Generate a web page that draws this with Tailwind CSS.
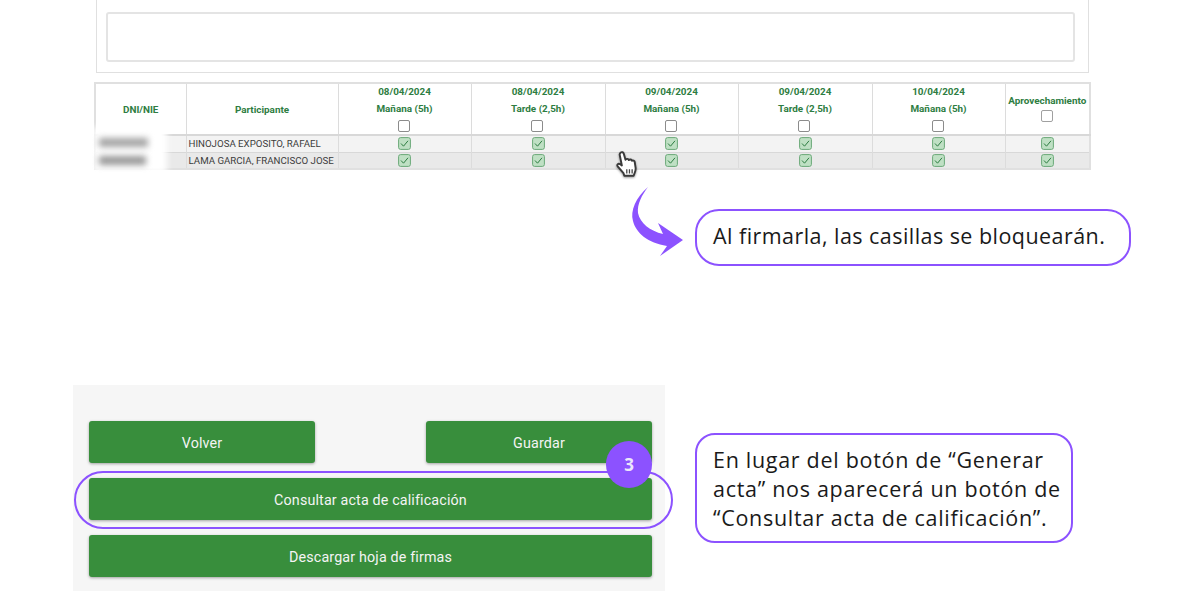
<!DOCTYPE html>
<html lang="es">
<head>
    <meta charset="UTF-8">
    <title>Acta de calificación</title>
    <script src="https://cdn.jsdelivr.net/npm/@tailwindcss/browser@4"></script>
</head>
<body class="bg-white">
<main class="relative w-[1200px] h-[612px] overflow-hidden bg-white font-['Roboto',sans-serif]">

    <!-- caja de observaciones -->
    <div class="ml-[96px] w-[993px] h-[73px] border-[1.5px] border-[#e0e0e0] border-t-0 pl-[9px] pr-[13px] pt-[12px]">
        <div class="h-[50px] border-2 border-[#e4e4e4] rounded-[3px]"></div>
    </div>

    <!-- tabla de asistencia -->
    <table class="mt-[9px] ml-[94px] w-[995px] table-fixed border-collapse border-2 border-[#e0e0e0] text-[9.900px] leading-[17px]">
        <colgroup>
            <col class="w-[91px]"><col class="w-[152px]"><col class="w-[133px]"><col class="w-[134px]"><col class="w-[133px]"><col class="w-[134px]"><col class="w-[133px]"><col class="w-[85px]">
        </colgroup>
        <thead class="text-[#2e7d42] font-bold text-center">
            <tr class="h-[52px] border-b-2 border-[#d8d8d8]">
                <th class="border-r-[1.5px] border-[#dcdcdc]">DNI/NIE</th>
                <th class="border-r-[1.5px] border-[#dcdcdc]">Participante</th>
                <th class="border-r-[1.5px] border-[#dcdcdc] align-top"><div class="leading-[16px]">08/04/2024</div><div>Mañana (5h)</div><span class="block mx-auto mt-[3px] -translate-x-[1px] w-[12px] h-[12px] border border-[#8c8c8c] rounded-[2px]"></span></th>
                <th class="border-r-[1.5px] border-[#dcdcdc] align-top"><div class="leading-[16px]">08/04/2024</div><div>Tarde (2,5h)</div><span class="block mx-auto mt-[3px] -translate-x-[1px] w-[12px] h-[12px] border border-[#8c8c8c] rounded-[2px]"></span></th>
                <th class="border-r-[1.5px] border-[#dcdcdc] align-top"><div class="leading-[16px]">09/04/2024</div><div>Mañana (5h)</div><span class="block mx-auto mt-[3px] -translate-x-[1px] w-[12px] h-[12px] border border-[#8c8c8c] rounded-[2px]"></span></th>
                <th class="border-r-[1.5px] border-[#dcdcdc] align-top"><div class="leading-[16px]">09/04/2024</div><div>Tarde (2,5h)</div><span class="block mx-auto mt-[3px] -translate-x-[1px] w-[12px] h-[12px] border border-[#8c8c8c] rounded-[2px]"></span></th>
                <th class="border-r-[1.5px] border-[#dcdcdc] align-top"><div class="leading-[16px]">10/04/2024</div><div>Mañana (5h)</div><span class="block mx-auto mt-[3px] -translate-x-[1px] w-[12px] h-[12px] border border-[#8c8c8c] rounded-[2px]"></span></th>
                <th class="align-top pt-[8px]"><div class="whitespace-nowrap">Aprovechamiento</div><span class="block mx-auto mt-[1px] w-[12px] h-[12px] border border-[#a0a0a0] rounded-[2px]"></span></th>
            </tr>
        </thead>
        <tbody id="filas" class="text-[#3c3c3c] font-normal leading-[15px] text-[9.700px]"></tbody>
    </table>

    <!-- mancha que tapa los DNI -->
    <div class="absolute left-[93px] top-[127px] w-[74px] h-[46px] bg-white blur-[3px]"></div>
    <div class="absolute left-[99px] top-[138px] w-[49px] h-[9px] bg-[#a4a4a4] blur-[3px]"></div>
    <div class="absolute left-[99px] top-[156px] w-[47px] h-[9px] bg-[#989898] blur-[3px]"></div>

    <!-- cursor -->
    <svg class="absolute left-[613px] top-[150px] drop-shadow-[0_1px_1px_rgba(0,0,0,0.4)]" width="28" height="30" viewBox="0 0 26 28">
        <path d="M7 2.500c1.200-1 2.600-.4 3 1l1.600 5.600c.9-1.200 2.600-1 3.100.3.9-.9 2.500-.6 2.900.6 1-.6 2.400-.1 2.600 1.200l.8 5.300c.3 2-.2 3.700-1 5.300l-.8 2.200H10.500l-.8-2.400-5.400-6.300c-1-1.300.4-3 2-2.200l1.900 1.400L6.200 4.600c-.2-.9.200-1.600.8-2.100z" fill="#fff" stroke="#3a3a3a" stroke-width="1.800" stroke-linejoin="round"/>
        <path d="M12.800 18v4M15.300 18v4M17.800 18v4" stroke="#444" stroke-width="1.200"/>
    </svg>

    <!-- flecha -->
    <svg class="absolute left-[630px] top-[185px]" width="56" height="74" viewBox="0 0 56 74">
        <path d="M18 2C6 12 0 26 3 36 6 48 18 58 37 61L30 71 53 55 28 38 33 49C20 46 10 38 8 28 7 19 12 10 18 2z" fill="#8c52ff"/>
    </svg>

    <!-- llamada 1 -->
    <div class="absolute left-[695px] top-[209px] w-[436px] h-[57px] flex items-center pl-[16px] pb-[2px] border-[2.700px] border-[#8c52ff] rounded-[24px] text-[21.500px] text-[#1a1a1a] font-['Open_Sans',sans-serif] tracking-[0.45px] whitespace-nowrap">Al firmarla, las casillas se bloquearán.</div>

    <!-- panel de botones -->
    <section class="absolute left-[73px] top-[385px] w-[592px] h-[206px] bg-[#f6f6f6] pl-[16px] pr-[13px] pt-[36px] flex flex-col gap-[15px] text-[#f4f4f4] text-[14.300px] tracking-[0.15px]">
        <div class="flex justify-between">
            <button class="w-[226px] h-[42px] pt-[3px] bg-[#388e3c] rounded-[3px] shadow-[0_1px_3px_rgba(0,0,0,0.35)]">Volver</button>
            <button class="w-[226px] h-[42px] pt-[3px] bg-[#388e3c] rounded-[3px] shadow-[0_1px_3px_rgba(0,0,0,0.35)]">Guardar</button>
        </div>
        <button class="h-[42px] pt-[3px] bg-[#388e3c] rounded-[3px] shadow-[0_1px_3px_rgba(0,0,0,0.35)]">Consultar acta de calificación</button>
        <button class="h-[42px] pt-[3px] bg-[#388e3c] rounded-[3px] shadow-[0_1px_3px_rgba(0,0,0,0.35)]">Descargar hoja de firmas</button>
    </section>

    <!-- resaltado del botón -->
    <div class="absolute left-[74px] top-[471px] w-[599px] h-[58px] border-[2.700px] border-[#8c52ff] rounded-full"></div>
    <div class="absolute left-[606px] top-[441px] w-[46px] h-[47px] rounded-full bg-[#8c52ff] flex items-center justify-center text-[#ece6fb] text-[17px] font-bold font-['Open_Sans',sans-serif]">3</div>

    <!-- llamada 2 -->
    <div class="absolute left-[695px] top-[433px] w-[378px] h-[110px] flex flex-col justify-center pl-[16px] border-[2.700px] border-[#8c52ff] rounded-[20px] text-[21.500px] leading-[29px] text-[#1a1a1a] font-['Open_Sans',sans-serif] tracking-[0.7px] whitespace-nowrap">
        <span>En lugar del botón de “Generar</span>
        <span>acta” nos aparecerá un botón de</span>
        <span>“Consultar acta de calificación”.</span>
    </div>
</main>

<script>
    const filas = [
        { nombre: 'HINOJOSA EXPOSITO, RAFAEL', fondo: 'bg-[#f3f3f3]' },
        { nombre: 'LAMA GARCIA, FRANCISCO JOSE', fondo: 'bg-[#e9e9e9]' },
    ];
    const check = `<svg class="block mx-auto" width="13" height="13" viewBox="0 0 13 13"><rect x=".6" y=".6" width="11.800" height="11.800" rx="2" fill="#bfe0c4" stroke="#6aa878"/><path d="M3 6.500l2.500 2.700L10 3.800" fill="none" stroke="#2e7d42" stroke-width="1"/></svg>`;
    document.getElementById('filas').innerHTML = filas.map(f => `
        <tr class="h-[17px] border-b-[1.5px] border-[#d8d8d8] ${f.fondo}">
            <td class="border-r-[1.5px] border-[#dcdcdc]"></td>
            <td class="border-r-[1.5px] border-[#dcdcdc] pl-[2px] whitespace-nowrap">${f.nombre}</td>
            ${Array(5).fill(`<td class="border-r-[1.5px] border-[#dcdcdc]">${check}</td>`).join('')}
            <td>${check}</td>
        </tr>`).join('');
</script>
</body>
</html>
